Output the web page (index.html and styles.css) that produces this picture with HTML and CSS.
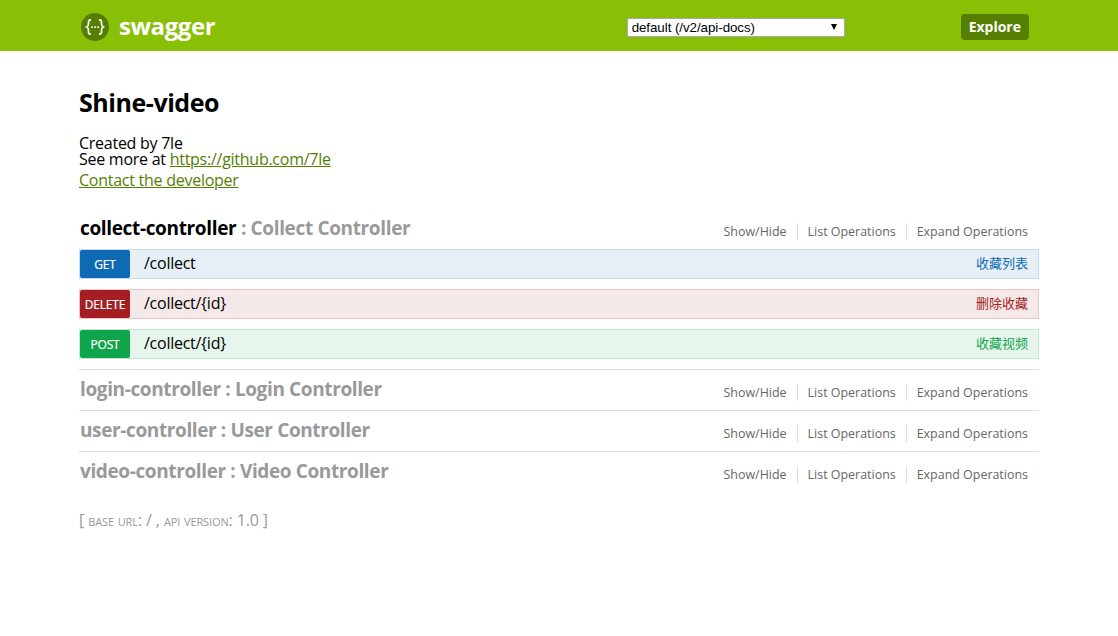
FILE: index.html
```html
<!DOCTYPE html>
<html lang="en">
<head>
<meta charset="utf-8">
<title>Swagger UI</title>
<link rel="stylesheet" href="styles.css">
</head>
<body>
<header class="header">
  <div class="header-inner">
    <a class="logo" href="#">
      <svg class="logo-icon" width="30" height="30" viewBox="0 0 30 30" aria-hidden="true">
        <circle cx="15" cy="15" r="14" fill="#547f00"/>
        <path d="M11 7.8c-2.9 0-2.5 1.9-2.5 3.7 0 1.8-.5 3-1.7 3.5 1.2.5 1.7 1.7 1.7 3.5 0 1.8-.4 3.7 2.5 3.7M19 7.8c2.9 0 2.5 1.9 2.5 3.7 0 1.8.5 3 1.7 3.5-1.2.5-1.7 1.7-1.7 3.5 0 1.8.4 3.7-2.5 3.7" fill="none" stroke="#fff" stroke-width="1.7"/>
        <path d="M11.2 15.2h1.6M14.2 15.2h1.6M17.2 15.2h1.6" stroke="#fff" stroke-width="1.8"/>
      </svg>
      <span class="logo-text">swagger</span>
    </a>
    <div class="explore-form">
      <div class="select-wrap"><select class="spec-select"><option>default (/v2/api-docs)</option></select></div>
      <a class="explore" href="#">Explore</a>
    </div>
  </div>
</header>
<main class="container">
  <section class="info">
    <h1 class="title">Shine-video</h1>
    <div class="desc">Created by 7le<br>See more at <a href="#">https://github.com/7le</a></div>
    <div class="contact"><a href="#">Contact the developer</a></div>
  </section>

  <section class="resource first">
    <div class="resource-head">
      <h2 class="res-title"><span class="res-name active">collect-controller</span> : Collect Controller</h2>
      <ul class="res-links"><li>Show/Hide</li><li>List Operations</li><li>Expand Operations</li></ul>
    </div>
    <div class="op op-get"><span class="verb">GET</span><span class="path">/collect</span><span class="summary">收藏列表</span></div>
    <div class="op op-delete"><span class="verb">DELETE</span><span class="path">/collect/{id}</span><span class="summary">删除收藏</span></div>
    <div class="op op-post"><span class="verb">POST</span><span class="path">/collect/{id}</span><span class="summary">收藏视频</span></div>
  </section>
  <section class="resource">
    <div class="resource-head">
      <h2 class="res-title"><span class="res-name">login-controller</span> : Login Controller</h2>
      <ul class="res-links"><li>Show/Hide</li><li>List Operations</li><li>Expand Operations</li></ul>
    </div>
  </section>
  <section class="resource">
    <div class="resource-head">
      <h2 class="res-title"><span class="res-name">user-controller</span> : User Controller</h2>
      <ul class="res-links"><li>Show/Hide</li><li>List Operations</li><li>Expand Operations</li></ul>
    </div>
  </section>
  <section class="resource last">
    <div class="resource-head">
      <h2 class="res-title"><span class="res-name">video-controller</span> : Video Controller</h2>
      <ul class="res-links"><li>Show/Hide</li><li>List Operations</li><li>Expand Operations</li></ul>
    </div>
  </section>
  <p class="footer">[ <span class="sc">base url</span>: / , <span class="sc">api version</span>: 1.0 ]</p>
</main>
</body>
</html>
```
FILE: styles.css
```css
* { box-sizing: border-box; }
html, body { margin: 0; padding: 0; }
body {
  background: #fff;
  color: #000;
  font-family: "Open Sans", "Noto Sans", "Noto Sans CJK SC", sans-serif;
  font-size: 16px;
  letter-spacing: -0.26px;
}
a { color: #547f00; }
.header { background: #89bf04; height: 51px; }
.header-inner {
  width: 960px;
  margin: 0 auto;
  height: 100%;
  display: flex;
  align-items: center;
  justify-content: space-between;
  padding-right: 10px;
}
.logo { display: flex; align-items: center; gap: 9px; text-decoration: none; padding-left: 1px; }
.logo-icon { display: block; margin-top: 2px; }
.logo-text { color: #fff; font-size: 24px; font-weight: 700; line-height: 30px; letter-spacing: -0.43px; }
.explore-form { display: flex; align-items: center; gap: 116px; }
.select-wrap { position: relative; width: 218px; height: 19px; margin-top: 3px; }
.select-wrap::after {
  content: "";
  position: absolute;
  left: 204px;
  top: 6px;
  border-left: 3.5px solid transparent;
  border-right: 3.5px solid transparent;
  border-top: 6px solid #000;
  pointer-events: none;
}
.spec-select {
  display: block;
  width: 100%;
  height: 100%;
  padding: 0 0 0 4px;
  background: #fff;
  border: 1px solid #a9a9a9;
  border-radius: 0;
  appearance: none;
  font-family: "Liberation Sans", Arial, sans-serif;
  font-size: 13.33px;
  letter-spacing: -0.05px;
  color: #000;
}
.explore {
  display: block;
  background: #547f00;
  color: #fff;
  border-radius: 4px;
  font-size: 14px;
  font-weight: 700;
  letter-spacing: 0;
  line-height: 26px;
  height: 26px;
  padding: 0 8px;
  text-decoration: none;
  margin-top: 3px;
}
.container { width: 960px; margin: 0 auto; }
.info { padding-top: 36px; }
.title { margin: 0; font-size: 25px; font-weight: 700; line-height: 30px; letter-spacing: -0.45px; }
.desc { margin-top: 18px; line-height: 16px; }
.contact { margin-top: 2px; line-height: 22px; }
.resource { border-bottom: 1px solid #ddd; }
.resource.last { border-bottom: none; }
.resource.first { margin-top: 19px; padding-bottom: 10px; }
.resource-head {
  display: flex;
  justify-content: space-between;
  align-items: center;
  height: 40px;
  padding: 0 0 2px 1px;
}
.resource.first .resource-head { height: 39px; padding-bottom: 3px; }
.res-title { margin: 0; font-size: 19px; font-weight: 700; color: #999; line-height: 24px; letter-spacing: -0.38px; }
.resource.first .res-title { letter-spacing: -0.35px; }
.res-name.active { color: #000; }
.res-links { display: flex; list-style: none; margin: 6px 0 0; padding: 0; font-size: 12.45px; letter-spacing: 0; color: #666; }
.res-links li { padding: 0 10px; line-height: 17px; border-right: 1px solid #ddd; }
.res-links li:last-child { border-right: none; padding-right: 11px; }
.op {
  display: flex;
  align-items: center;
  height: 30px;
  border: 1px solid;
  margin-bottom: 10px;
}
.op:last-child { margin-bottom: 0; }
.verb {
  width: 50px;
  height: 28px;
  padding-top: 1px;
  line-height: 28px;
  border-radius: 2px;
  color: #fff;
  font-size: 12px;
  font-weight: 400;
  letter-spacing: -0.2px;
  text-align: center;
  -webkit-text-stroke: 0.2px #fff;
}
.path { flex: 1; padding: 0 0 2px 14px; font-size: 16px; line-height: 26px; color: #000; }
.summary { padding: 0 10px 3px 0; font-size: 13px; letter-spacing: 0; font-family: "Noto Sans CJK SC", sans-serif; }
.op-get { background: #e7f0f7; border-color: #c3d9ec; }
.op-get .verb { background: #0f6ab4; }
.op-get .summary { color: #0f6ab4; }
.op-delete { background: #f5e8e8; border-color: #e8c6c7; }
.op-delete .verb { background: #a41e22; }
.op-delete .summary { color: #a41e22; }
.op-post { background: #e7f6ec; border-color: #c3e8d1; }
.op-post .verb { background: #10a54a; }
.op-post .summary { color: #10a54a; }
.footer { margin: 17px 0 0; font-size: 16px; line-height: 22px; letter-spacing: -0.12px; color: #999; }
.sc { font-variant: small-caps; font-size: 15.2px; }
```
